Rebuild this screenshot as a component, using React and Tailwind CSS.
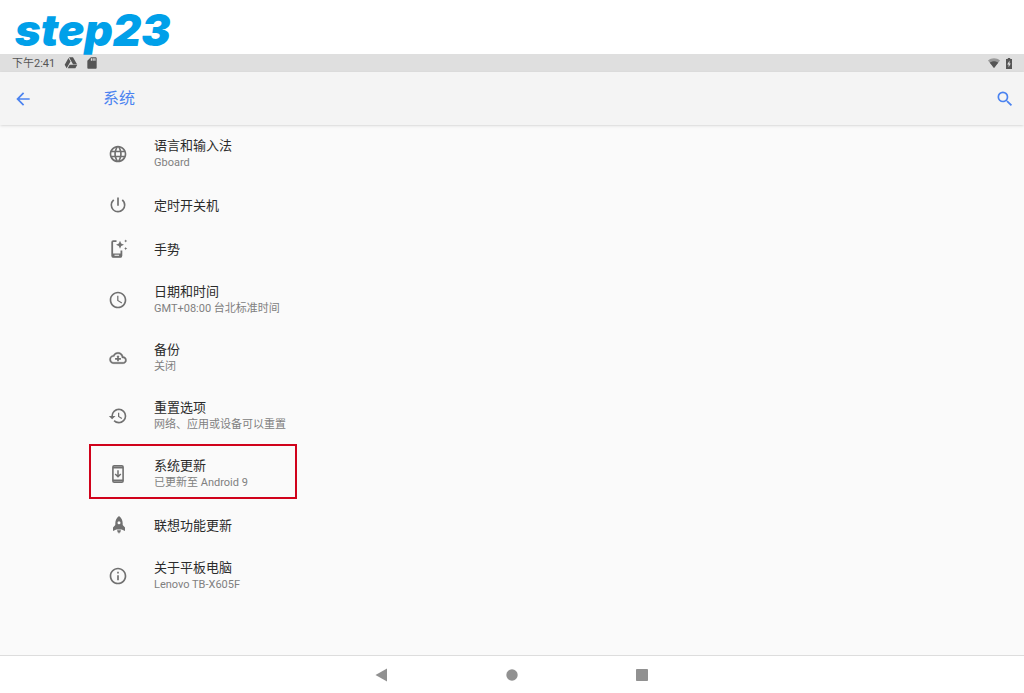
import React from 'react';
import {
  MdArrowBack,
  MdSearch,
  MdLanguage,
  MdPowerSettingsNew,
  MdAccessTime,
  MdHistory,
  MdInfoOutline,
  MdSdCard,
} from 'react-icons/md';

const GestureIcon = () => (
  <svg viewBox="0 0 20 20" className="size-5" fill="currentColor" aria-hidden="true">
    <path d="M8.500 2.200H5.200c-.6 0-1 .4-1 1v13.600c0 .6.4 1 1 1h7.200c.6 0 1-.4 1-1V11.500" fill="none" stroke="currentColor" strokeWidth="1.800" />
    <path fillRule="evenodd" d="M4 14.500h9.600v3.700H4zM6.500 15.800v1h4.600v-1z" />
    <path d="M12 1.700l1.200 2.800L16 5.700l-2.800 1.200L12 9.700l-1.200-2.800L8 5.700l2.800-1.200z" />
    <path d="M17.700.4l.5 1.100 1.100.5-1.100.5-.5 1.100-.5-1.100-1.100-.5 1.100-.5z" />
    <path d="M17.700 8l.5 1.100 1.100.5-1.100.5-.5 1.100-.5-1.100-1.100-.5 1.100-.5z" />
  </svg>
);

const BackupIcon = () => (
  <svg viewBox="-2 -2 28 28" className="size-5" fill="currentColor" aria-hidden="true">
    <path
      d="M19.350 10.040C18.670 6.590 15.640 4 12 4 9.110 4 6.600 5.640 5.350 8.040 2.340 8.360 0 10.910 0 14c0 3.310 2.690 6 6 6h13c2.760 0 5-2.240 5-5 0-2.640-2.050-4.780-4.650-4.960zM19 18H6c-2.210 0-4-1.790-4-4s1.790-4 4-4h.71C7.370 7.690 9.480 6 12 6c3.040 0 5.500 2.460 5.500 5.500v.5H19c1.660 0 3 1.340 3 3s-1.340 3-3 3z"
      stroke="currentColor"
      strokeWidth=".5"
    />
    <path d="M12 8l2.200 2.700h-1v1.400h2.900v2.200h-2.900v2.200h-2.400v-2.200H7.900v-2.200h2.900v-1.400h-1z" />
  </svg>
);

const UpdateIcon = () => (
  <svg viewBox="0 0 20 20" className="size-5" aria-hidden="true">
    <rect x="4.900" y="1.800" width="10.200" height="16.400" rx="1.300" fill="none" stroke="currentColor" strokeWidth="1.600" />
    <path d="M5 3.600h10M5 16.400h10" stroke="currentColor" strokeWidth="2" />
    <path d="M10 6.300v6M7.200 10l2.800 2.800 2.800-2.800" fill="none" stroke="currentColor" strokeWidth="1.500" />
  </svg>
);

const RocketIcon = () => (
  <svg viewBox="0 0 20 20" className="size-5" fill="currentColor" aria-hidden="true">
    <path
      fillRule="evenodd"
      d="M11 1c2.500 1.900 3.700 4.600 3.700 7.200v1.900l2.300 2.500v3.300l-3.300-1.400H8.300L5 15.900v-3.300l2.300-2.500V8.200C7.300 5.600 8.500 2.900 11 1zm0 5.200a1.500 1.500 0 100 3 1.500 1.500 0 000-3z"
    />
    <path d="M9 15.200h4l-.8 2.300h-.7l-.5 1.500-.5-1.500h-.7z" />
  </svg>
);

const DriveIcon = () => (
  <svg viewBox="0 0 24 24" className="size-[14px]" fill="currentColor" aria-hidden="true">
    <path d="M7.710 3.500L1.150 15l3.430 6 6.550-11.500zM9.730 15L6.300 21h13.120l3.430-6zM22.280 14L15.420 2H8.580l6.850 12z" />
  </svg>
);

const WifiIcon = () => (
  <svg viewBox="0 0 12 10" className="h-[10px] w-3" aria-hidden="true">
    <path d="M6 10L0 2.500C3.500-.6 8.500-.6 12 2.500z" fill="#999999" />
    <path d="M6 10L1.800 4.700c2.500-2 5.900-2 8.400 0z" fill="#555555" />
  </svg>
);

const BatteryIcon = () => (
  <svg viewBox="0 0 6 11" className="h-[11px] w-[6px]" aria-hidden="true">
    <path d="M1.800 0h2.400v1H6v10H0V1h1.800z" fill="#555555" />
    <path d="M3.500 2.500v2.900h1.300L2.600 9.300V6.500H1.200z" fill="#dfdfdf" />
  </svg>
);

const settings = [
  { icon: <MdLanguage size={20} />, title: '语言和输入法', summary: 'Gboard' },
  { icon: <MdPowerSettingsNew size={20} />, title: '定时开关机' },
  { icon: <GestureIcon />, title: '手势' },
  { icon: <MdAccessTime size={20} />, title: '日期和时间', summary: 'GMT+08:00 台北标准时间' },
  { icon: <BackupIcon />, title: '备份', summary: '关闭' },
  { icon: <MdHistory size={20} />, title: '重置选项', summary: '网络、应用或设备可以重置' },
  { icon: <UpdateIcon />, title: '系统更新', summary: '已更新至 Android 9', highlighted: true },
  { icon: <RocketIcon />, title: '联想功能更新' },
  { icon: <MdInfoOutline size={20} />, title: '关于平板电脑', summary: 'Lenovo TB-X605F' },
];

const SettingRow = ({ icon, title, summary, highlighted }) => (
  <li className="relative">
    <button
      type="button"
      className={`flex w-full items-center pl-27 text-left ${summary ? 'h-[58px]' : 'h-11'}`}
    >
      <span className="w-[46px] shrink-0 text-[#707070]">{icon}</span>
      <span>
        <span className="block text-[13px] leading-[17px] text-[#2b2b2b]">{title}</span>
        {summary && <span className="block text-[11px] leading-[17px] text-[#808080]">{summary}</span>}
      </span>
    </button>
    {highlighted && (
      <span className="pointer-events-none absolute -top-px left-[89px] h-[55px] w-52 border-2 border-[#d0021b]" />
    )}
  </li>
);

const App = () => {
  return (
    <div className="flex min-h-screen flex-col bg-[#fafafa] font-[Roboto,'Noto_Sans_CJK_SC',sans-serif]">
      <div className="h-[54px] bg-white pl-[15px]">
        <h1 className="relative z-10 font-[Inter,sans-serif] text-[44px] leading-[60px] font-black text-[#00a0e9] italic">
          step23
        </h1>
      </div>

      {/* Status bar */}
      <div className="flex h-[18px] items-center justify-between bg-[#dfdfdf] px-3 text-[#555555]">
        <div className="flex items-center gap-[7px]">
          <span className="mr-0.5 text-[11px] leading-[17px]">下午2:41</span>
          <DriveIcon />
          <MdSdCard size={14} />
        </div>
        <div className="flex items-center gap-[6px]">
          <WifiIcon />
          <BatteryIcon />
        </div>
      </div>

      {/* Toolbar */}
      <header className="flex h-[53px] items-center bg-[#f4f4f4] pr-[9px] pl-[13px] text-[#4b83f0] shadow-sm">
        <button type="button" aria-label="返回" className="w-[90px]">
          <MdArrowBack size={20} />
        </button>
        <h2 className="flex-1 text-[16px] leading-6">系统</h2>
        <button type="button" aria-label="搜索">
          <MdSearch size={20} />
        </button>
      </header>

      <main className="flex-1">
        <ul>
          {settings.map((item) => (
            <SettingRow key={item.title} {...item} />
          ))}
        </ul>
      </main>

      {/* Navigation bar */}
      <nav className="flex h-[38px] items-center justify-center gap-[110px] border-t border-[#dddddd] bg-white text-[#919191]">
        <button type="button" aria-label="后退">
          <svg viewBox="0 0 20 20" className="size-5" fill="currentColor" aria-hidden="true">
            <path d="M3.500 10L15 3.500v13z" />
          </svg>
        </button>
        <button type="button" aria-label="主屏幕">
          <svg viewBox="0 0 20 20" className="size-5" fill="currentColor" aria-hidden="true">
            <circle cx="10" cy="10" r="5.700" />
          </svg>
        </button>
        <button type="button" aria-label="最近">
          <svg viewBox="0 0 20 20" className="size-5" fill="currentColor" aria-hidden="true">
            <rect x="4" y="4" width="12" height="12" rx=".8" />
          </svg>
        </button>
      </nav>
    </div>
  );
};

export default App;
